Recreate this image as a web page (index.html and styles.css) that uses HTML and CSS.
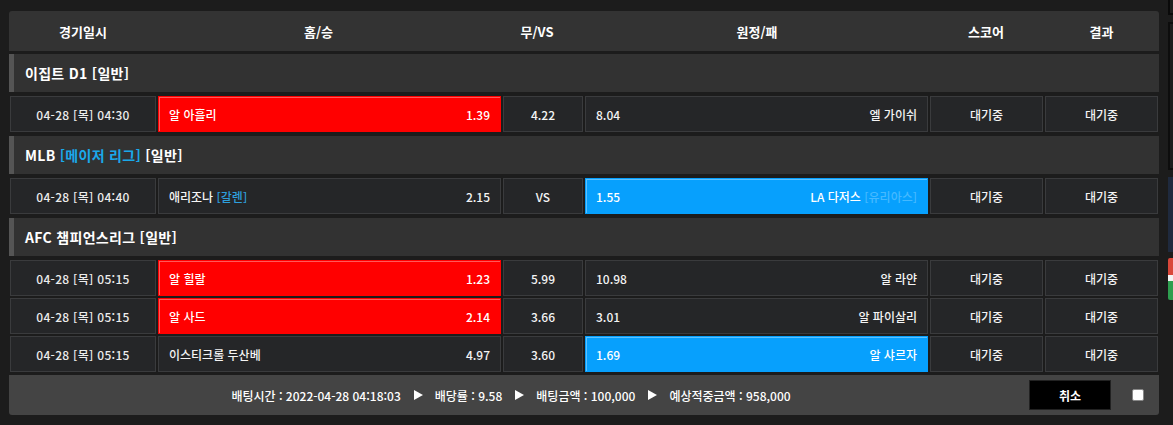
FILE: index.html
```html
<!DOCTYPE html>
<html lang="ko">
<head>
<meta charset="utf-8">
<title>배팅내역</title>
<link rel="stylesheet" href="styles.css">
</head>
<body>
<div class="board">
  <div class="head">
    <div>경기일시</div>
    <div>홈/승</div>
    <div>무/VS</div>
    <div>원정/패</div>
    <div>스코어</div>
    <div class="h-result">결과</div>
  </div>

  <section class="group">
    <div class="league">이집트 D1 [일반]</div>
    <div class="match">
      <div class="cell date">04-28 [목] 04:30</div>
      <div class="cell team home sel-red"><span>알 아흘리</span><span>1.39</span></div>
      <div class="cell draw">4.22</div>
      <div class="cell team away"><span>8.04</span><span>엘 가이쉬</span></div>
      <div class="cell status">대기중</div>
      <div class="cell status">대기중</div>
    </div>
  </section>

  <section class="group">
    <div class="league">MLB <em>[메이저 리그]</em> [일반]</div>
    <div class="match">
      <div class="cell date">04-28 [목] 04:40</div>
      <div class="cell team home"><span>애리조나 <em class="pitcher">[갈렌]</em></span><span>2.15</span></div>
      <div class="cell draw">VS</div>
      <div class="cell team away sel-blue"><span>1.55</span><span>LA 다저스 <em class="pitcher-on">[유리아스]</em></span></div>
      <div class="cell status">대기중</div>
      <div class="cell status">대기중</div>
    </div>
  </section>

  <section class="group">
    <div class="league">AFC 챔피언스리그 [일반]</div>
    <div class="match">
      <div class="cell date">04-28 [목] 05:15</div>
      <div class="cell team home sel-red"><span>알 힐랄</span><span>1.23</span></div>
      <div class="cell draw">5.99</div>
      <div class="cell team away"><span>10.98</span><span>알 라얀</span></div>
      <div class="cell status">대기중</div>
      <div class="cell status">대기중</div>
    </div>
    <div class="match">
      <div class="cell date">04-28 [목] 05:15</div>
      <div class="cell team home sel-red"><span>알 사드</span><span>2.14</span></div>
      <div class="cell draw">3.66</div>
      <div class="cell team away"><span>3.01</span><span>알 파이살리</span></div>
      <div class="cell status">대기중</div>
      <div class="cell status">대기중</div>
    </div>
    <div class="match">
      <div class="cell date">04-28 [목] 05:15</div>
      <div class="cell team home"><span>이스티크롤 두산베</span><span>4.97</span></div>
      <div class="cell draw">3.60</div>
      <div class="cell team away sel-blue"><span>1.69</span><span>알 샤르자</span></div>
      <div class="cell status">대기중</div>
      <div class="cell status">대기중</div>
    </div>
  </section>

  <div class="foot">
    <div class="summary">배팅시간 : 2022-04-28 04:18:03<i class="arrow"></i>배당률 : 9.58<i class="arrow"></i>배팅금액 : 100,000<i class="arrow"></i>예상적중금액 : 958,000</div>
    <button class="cancel" type="button">취소</button>
    <span class="check"></span>
  </div>
</div>

<aside class="side">
  <div class="side-top"></div>
  <div class="side-box"></div>
  <div class="side-navy"></div>
  <div class="side-flag"></div>
</aside>
</body>
</html>
```

FILE: styles.css
```css
* { box-sizing: border-box; }

html, body {
  margin: 0;
  height: 100%;
}

body {
  background: #1c1c1c;
  color: #fff;
  font-family: "Noto Sans CJK KR", "Noto Sans", sans-serif;
  font-size: 12px;
  display: flex;
  align-items: flex-start;
  gap: 9px;
  padding-left: 9px;
  overflow: hidden;
}

.board {
  width: 1150px;
  flex: none;
  margin-top: 11px;
  display: flex;
  flex-direction: column;
}

.head {
  height: 40px;
  background: #333;
  border-radius: 3px 3px 0 0;
  display: grid;
  grid-template-columns: 148px 323px 114px 326px 132px 1fr;
  align-items: center;
  text-align: center;
  font-size: 13px;
  font-weight: bold;
  margin-bottom: 3px;
}

.head .h-result { padding-right: 8px; }

.group {
  display: flex;
  flex-direction: column;
  gap: 2px;
  margin-bottom: 4px;
}

.group:nth-of-type(3) { margin-bottom: 3px; }

.league {
  height: 38px;
  background: #323232;
  border-left: 5px solid #555;
  padding-left: 11px;
  display: flex;
  align-items: center;
  font-size: 14px;
  font-weight: bold;
  letter-spacing: 0.3px;
  margin-bottom: 2px;
  white-space: pre;
}

.league em {
  font-style: normal;
  color: #1aa9ea;
}

.match {
  display: grid;
  grid-template-columns: 146px 343px 80px 343px 113px 113px;
  gap: 2px;
  padding: 0 1px;
  font-weight: 500;
}

.cell {
  height: 36px;
  background: #252628;
  border: 1px solid #3a3b3d;
  display: flex;
  align-items: center;
  justify-content: center;
  color: #f4f4f4;
}

.date {
  color: #ececec;
  letter-spacing: 0.3px;
}

.team {
  justify-content: space-between;
  padding: 0 10px;
}

.team em {
  font-style: normal;
}

.pitcher { color: #2e9fdc; }
.pitcher-on { color: #45b9ff; }

.sel-red {
  background: #ff0000;
  border-color: #ff0000;
  box-shadow: inset 1px 1px 0 rgba(255, 255, 255, 0.35);
  color: #fff;
}

.sel-blue {
  background: #07a0fd;
  border-color: #07a0fd;
  box-shadow: inset 1px 1px 0 rgba(255, 255, 255, 0.35);
  color: #fff;
}

.foot {
  height: 40px;
  background: #444;
  border-radius: 0 0 3px 3px;
  display: flex;
  align-items: center;
  padding-right: 15px;
}

.summary {
  flex: 1;
  display: flex;
  align-items: center;
  justify-content: center;
  font-weight: 500;
  padding-right: 16px;
}

.arrow {
  width: 0;
  height: 0;
  border-left: 9px solid #fff;
  border-top: 5px solid transparent;
  border-bottom: 5px solid transparent;
  margin: 0 12px 0 13px;
}

.cancel {
  width: 82px;
  height: 30px;
  background: #000;
  border: 1px solid #222;
  color: #fff;
  font-family: inherit;
  font-size: 12px;
  font-weight: bold;
  padding: 0;
  margin-right: 21px;
}

.check {
  width: 12px;
  height: 12px;
  background: #fff;
  border: 1px solid #888;
  border-radius: 2px;
}

.side {
  width: 200px;
  flex: none;
  display: flex;
  flex-direction: column;
}

.side-top {
  height: 15px;
  border: 2px solid #0a0a0a;
  border-top: none;
  background: #1e1e1e;
}

.side-box {
  height: 148px;
  margin-top: 7px;
  border: 2px solid #0d0d0d;
  background: #1d1d1d;
}

.side-navy {
  height: 75px;
  margin-top: 7px;
  background: #1f2a3e;
}

.side-flag {
  height: 42px;
  margin-top: 6px;
  background: linear-gradient(#d9473a 0 40%, #f4f4f4 40% 55%, #2e9e4f 55% 100%);
  border-radius: 2px 0 0 2px;
}
```
